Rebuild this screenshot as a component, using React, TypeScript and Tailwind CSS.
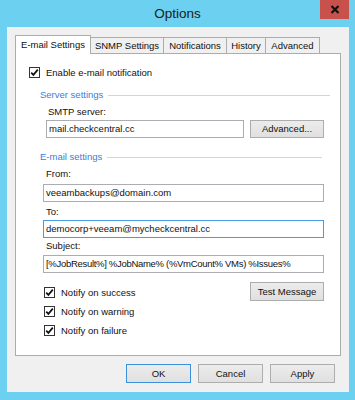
import React from 'react';

const font = { fontFamily: '"Liberation Sans", Arial, sans-serif' };

const CheckBox = ({ label }: { label: string }) => (
  <div className="flex items-center h-[11px]">
    <div className="w-[11px] h-[11px] border border-[#333333] bg-white flex items-center justify-center">
      <svg width="9" height="9" viewBox="0 0 9 9">
        <path d="M1.2 4.6 L3.4 6.9 L7.8 1.6" fill="none" stroke="#111" strokeWidth="1.7" />
      </svg>
    </div>
    <span className="ml-[6px] text-[9.5px] text-[#111] leading-none whitespace-nowrap">{label}</span>
  </div>
);

const GroupHeader = ({ title, width }: { title: string; width: string }) => (
  <div className={`flex items-center h-[12px] ml-[24px] ${width}`}>
    <span className="text-[9.5px] text-[#3a80d8] leading-none whitespace-nowrap">{title}</span>
    <div className="flex-1 h-px bg-[#d5d5d5] ml-[5px]" />
  </div>
);

const Label = ({ text, ml }: { text: string; ml: string }) => (
  <div className={`h-[12px] flex items-center text-[9.5px] text-[#111] leading-none ${ml}`}>{text}</div>
);

const TextBox = ({ value, cls, focused }: { value: string; cls: string; focused?: boolean }) => (
  <div
    className={`h-[18px] bg-white border flex items-center pl-[2px] text-[9.5px] text-[#111] leading-none whitespace-nowrap overflow-hidden ${
      focused ? 'border-[#4a9be6]' : 'border-[#abadb3]'
    } ${cls}`}
  >
    {value}
  </div>
);

const Button = ({ text, cls, isDefault }: { text: string; cls: string; isDefault?: boolean }) => (
  <div
    className={`flex items-center justify-center bg-gradient-to-b from-[#ececec] to-[#e0e0e0] border text-[9.5px] text-[#111] leading-none ${
      isDefault ? 'border-[#3c8fdc]' : 'border-[#adadad]'
    } ${cls}`}
  >
    {text}
  </div>
);

const tabs = ['SNMP Settings', 'Notifications', 'History', 'Advanced'];
const tabWidths = ['w-[74px]', 'w-[64px]', 'w-[40px]', 'w-[55px]'];

export default function App() {
  return (
    <div style={font} className="w-[355px] h-[400px] bg-[#6cd0f1] flex flex-col overflow-hidden">
      {/* title bar */}
      <div className="relative h-[27px] flex items-center justify-center">
        <span className="text-[13.5px] text-[#1b1b1b] mt-[1px]">Options</span>
        <div className="absolute right-[6px] top-0 w-[29px] h-[19px] bg-[#c9514b] flex items-center justify-center">
          <svg width="10" height="9" viewBox="0 0 10 9">
            <path d="M1.5 1 L8.5 8 M8.5 1 L1.5 8" stroke="#111" strokeWidth="2.2" />
          </svg>
        </div>
      </div>

      {/* client area */}
      <div className="ml-[7px] mr-[6px] h-[365px] bg-[#f0f0f0] flex flex-col pt-[8px] px-[8px]">
        {/* tabs */}
        <div className="flex items-end h-[19px] -mb-px relative z-10">
          <div className="w-[76px] h-[19px] bg-white border border-b-0 border-[#acacac] flex items-center justify-center text-[9.5px] text-[#111] leading-none">
            E-mail Settings
          </div>
          {tabs.map((t, i) => (
            <div
              key={t}
              className={`${tabWidths[i]} -ml-px h-[16px] mb-px bg-[#f0f0f0] border border-b-0 border-[#acacac] flex items-center justify-center text-[9.5px] text-[#111] leading-none`}
            >
              {t}
            </div>
          ))}
        </div>

        {/* panel */}
        <div className="h-[303px] bg-white border border-[#acacac] flex flex-col">
          <div className="mt-[13px] ml-[13px]">
            <CheckBox label="Enable e-mail notification" />
          </div>

          <div className="mt-[11px]">
            <GroupHeader title="Server settings" width="w-[290px]" />
          </div>
          <div className="mt-[5px]">
            <Label text="SMTP server:" ml="ml-[32px]" />
          </div>
          <div className="mt-[2px] flex">
            <TextBox value="mail.checkcentral.cc" cls="ml-[30px] w-[198px]" />
            <Button text="Advanced..." cls="ml-[6px] w-[74px] h-[18px]" />
          </div>

          <div className="mt-[13px]">
            <GroupHeader title="E-mail settings" width="w-[282px]" />
          </div>
          <div className="mt-[5px]">
            <Label text="From:" ml="ml-[30px]" />
          </div>
          <div className="mt-[4px]">
            <TextBox value="veeambackups@domain.com" cls="ml-[27px] w-[281px]" />
          </div>
          <div className="mt-[4px]">
            <Label text="To:" ml="ml-[30px]" />
          </div>
          <div className="mt-[2px]">
            <TextBox value="democorp+veeam@mycheckcentral.cc" cls="ml-[27px] w-[281px]" focused />
          </div>
          <div className="mt-[2px]">
            <Label text="Subject:" ml="ml-[30px]" />
          </div>
          <div className="mt-[3px]">
            <TextBox
              value="[%JobResult%] %JobName% (%VmCount% VMs) %Issues%"
              cls="ml-[27px] w-[281px] tracking-[-0.3px]"
            />
          </div>

          <div className="mt-[9px] flex">
            <div className="ml-[28px] pt-[5px] flex flex-col gap-[8px] w-[206px]">
              <CheckBox label="Notify on success" />
              <CheckBox label="Notify on warning" />
              <CheckBox label="Notify on failure" />
            </div>
            <Button text="Test Message" cls="w-[74px] h-[19px]" />
          </div>
        </div>

        {/* dialog buttons */}
        <div className="mt-[8px] flex justify-end gap-[7px] pr-[6px]">
          <Button text="OK" cls="w-[65px] h-[19px]" isDefault />
          <Button text="Cancel" cls="w-[65px] h-[19px]" />
          <Button text="Apply" cls="w-[65px] h-[19px]" />
        </div>
      </div>
    </div>
  );
}
